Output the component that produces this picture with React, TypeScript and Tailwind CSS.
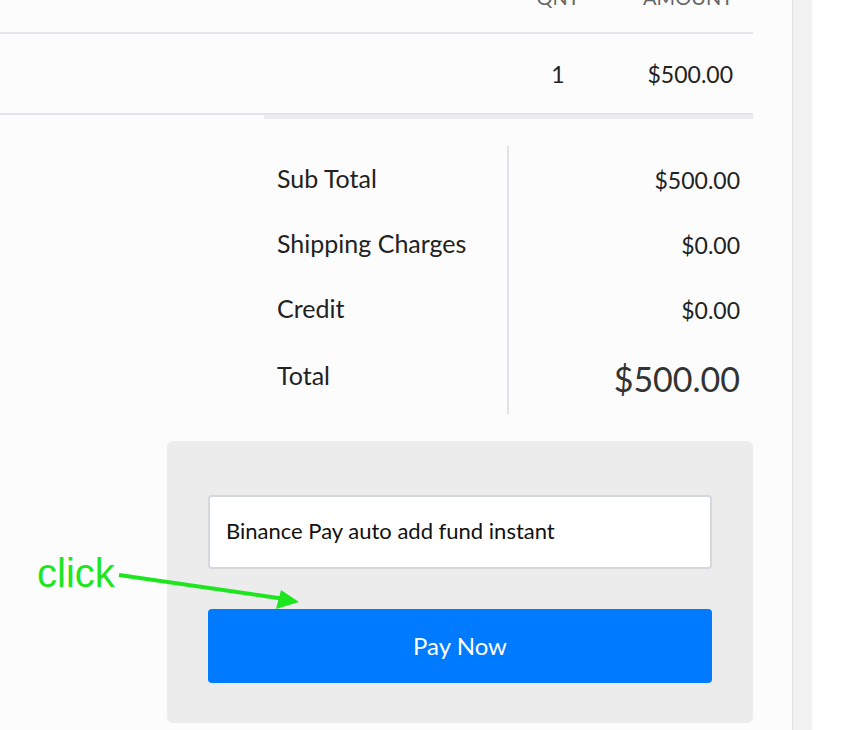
import React from 'react'

const rows = [
    { label: 'Sub Total', value: '$500.00' },
    { label: 'Shipping Charges', value: '$0.00' },
    { label: 'Credit', value: '$0.00' },
]

const App = () => {
    return (
        <div className="flex min-h-[730px] w-full overflow-hidden bg-white font-['Lato',sans-serif] text-[#222]">
            <div className="relative w-[793px] shrink-0 border-r border-[#e3e3e3] bg-[#fcfcfc] pr-[39px]">
                {/* invoice table */}
                <div className="flex h-[34px] items-start border-b-2 border-[#e4e4ea] text-[20px] uppercase text-[#666]">
                    <div className="ml-auto -mt-[14px] w-[110px] text-center leading-[22px]">QNT</div>
                    <div className="-mt-[14px] w-[140px] pr-[20px] text-right leading-[22px]">Amount</div>
                </div>
                <div className="flex h-[79px] items-center pt-[2px] text-[23px]">
                    <div className="ml-auto w-[110px] text-center">1</div>
                    <div className="w-[140px] pr-[20px] text-right">$500.00</div>
                </div>
                <div className="border-t-2 border-[#e4e4ea]">
                    <div className="ml-[264px] h-[4px] bg-[#ececec]"></div>
                </div>

                {/* totals */}
                <div className="ml-[264px] mt-[27px] flex">
                    <div className="w-[245px] border-r-2 border-[#e2e2e6] pl-[13px] pt-[0px] pb-[3px]">
                        {rows.map((r) => (
                            <div key={r.label} className="flex h-[65px] items-center text-[25px]">{r.label}</div>
                        ))}
                        <div className="flex h-[70px] items-center text-[25px]">Total</div>
                    </div>
                    <div className="flex-1 pt-[2px] pr-[13px] text-right">
                        {rows.map((r) => (
                            <div key={r.label} className="flex h-[65px] items-center justify-end text-[23px]">{r.value}</div>
                        ))}
                        <div className="flex h-[70px] items-center justify-end text-[34px] text-[#333]">$500.00</div>
                    </div>
                </div>

                {/* payment box */}
                <div className="ml-[167px] mt-[27px] rounded-[6px] bg-[#ececec] px-[41px] pt-[54px] pb-[40px]">
                    <div className="flex h-[74px] items-center rounded-[4px] border-2 border-[#d3d8de] bg-white px-[16px] pb-[3px] text-[22px] text-[#111]">
                        Binance Pay auto add fund instant
                    </div>
                    <button className="mt-[40px] flex h-[74px] w-full items-center justify-center rounded-[4px] bg-[#007bff] text-[24px] text-white">
                        Pay Now
                    </button>
                </div>

                {/* annotation */}
                <div className="absolute left-[37px] top-[550px] font-['Liberation_Sans',sans-serif] text-[40px] leading-[46px] text-[#1ee61e]">click</div>
                <svg className="absolute left-[115px] top-[565px]" width="190" height="48" viewBox="0 0 190 48">
                    <line x1="4" y1="10" x2="170" y2="34" stroke="#1ee61e" strokeWidth="4" />
                    <polygon points="184,37 161,44 166,25" fill="#1ee61e" />
                </svg>
            </div>
            <div className="w-[19px] shrink-0 bg-[#f2f2f2]"></div>
            <div className="flex-1 bg-white"></div>
        </div>
    )
}

export default App
